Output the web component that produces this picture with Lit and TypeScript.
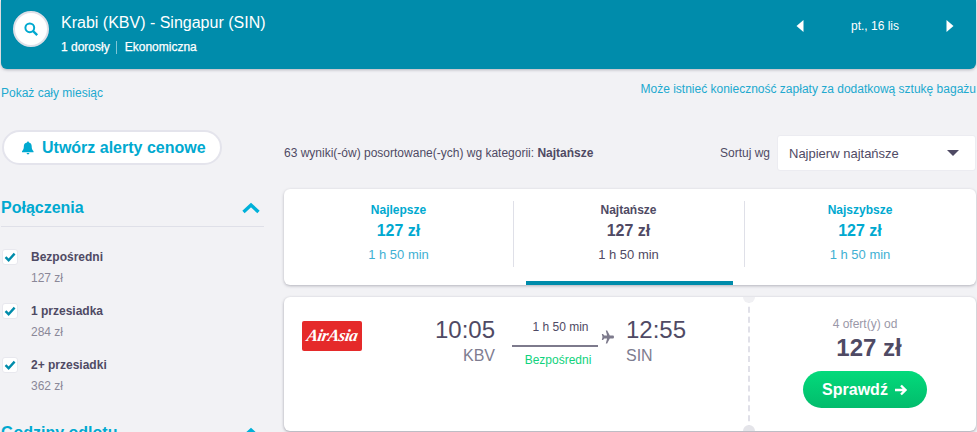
import { LitElement, html, css, svg } from "lit";
import { customElement } from "lit/decorators.js";

const check = html`<svg width="12" height="10" viewBox="0 0 12 10"><path d="M1.500 5.200 4.600 8.200 10.600 1.600" fill="none" stroke="#008cab" stroke-width="2.400"/></svg>`;
const chevron = svg`<path d="M1.500 10 9 3l7.500 7" fill="none" stroke="#00b1d9" stroke-width="3.400"/>`;

const filters = [
  ["Bezpośredni", "127 zł"],
  ["1 przesiadka", "284 zł"],
  ["2+ przesiadki", "362 zł"],
];
const tabs = [
  ["Najlepsze", false],
  ["Najtańsze", true],
  ["Najszybsze", false],
] as const;

@customElement("app-root")
export class AppRoot extends LitElement {
  static styles = css`
    :host { display: block; height: 432px; overflow: hidden; background: #f2f2f5; color: #4f4a64; font-family: "Liberation Sans", Arial, sans-serif; }
    * { box-sizing: border-box; }
    .head { height: 69px; margin: 0 1px; background: #008cab; border-radius: 0 0 6px 6px; box-shadow: 0 1px 3px rgba(60,60,80,.35); color: #fff; display: flex; padding: 11px 0 0 12px; }
    .search { width: 36px; height: 36px; border-radius: 50%; background: #fff; border: 2px solid #dfe0e8; display: flex; align-items: center; justify-content: center; flex: none; }
    .route { margin-left: 12px; flex: 1; padding-top: 1px; }
    .title { font-size: 16px; line-height: 22px; }
    .sub { display: flex; align-items: center; font-size: 12px; -webkit-text-stroke: .25px #fff; margin-top: 6px; line-height: 14px; }
    .sub i { width: 1px; height: 13px; background: #7fc5d5; margin: 0 8px 0 6px; }
    .date { width: 158px; margin-right: 22px; display: flex; justify-content: space-between; align-items: center; height: 22px; margin-top: 4px; font-size: 12px; }
    .links { display: flex; justify-content: space-between; align-items: center; font-size: 12px; color: #21a9cf; height: 43px; padding: 4px 1px 0 1px; }
    .links .r { position: relative; top: -4px; }
    .main { display: flex; padding-left: 2px; margin-top: 18px; }
    .side { width: 262px; flex: none; }
    .alert { width: 220px; height: 35px; background: #fff; border: 2px solid #e4e4ec; border-radius: 18px; display: flex; align-items: center; padding-left: 18px; gap: 8px; color: #00a9d0; font-weight: 700; font-size: 16px; }
    .sec { display: flex; justify-content: space-between; align-items: center; margin: 25px 0 0 -1px; height: 37px; border-bottom: 1px solid #dfe0e8; padding: 0 4px 0 0; color: #00a9d0; font-size: 16px; font-weight: 700; }
    .filters { padding-top: 22px; }
    .f { display: flex; height: 54px; }
    .box { width: 16px; height: 16px; background: #fff; border-radius: 3px; border: 1px solid #e8e8ee; display: flex; align-items: center; justify-content: center; margin-right: 13px; }
    .f b { display: block; font-size: 12px; line-height: 16px; }
    .f span { display: block; font-size: 12px; line-height: 14px; color: #8a8898; margin-top: 6px; }
    .sec2 { margin-top: 10px; border: 0; height: 24px; }
    .content { margin-left: 20px; width: 692px; flex: none; }
    .bar { display: flex; align-items: center; height: 46px; font-size: 12px; }
    .bar .n { flex: 1; }
    .sortl { font-size: 12px; margin-right: 7px; }
    .sel { width: 199px; height: 36px; background: #fff; border: 1px solid #ececf1; border-radius: 3px; display: flex; align-items: center; justify-content: space-between; padding: 0 16px 0 11px; font-size: 13px; }
    .arrow { width: 0; height: 0; border-left: 6px solid transparent; border-right: 6px solid transparent; border-top: 6px solid #4f4a64; }
    .tabs { margin-top: 13px; height: 96px; background: #fff; border-radius: 6px; box-shadow: 0 1px 3px rgba(60,60,80,.35); display: flex; padding-top: 12px; overflow: hidden; }
    .tab { flex: none; width: 229px; height: 84px; position: relative; text-align: center; color: #00a9d0; }
    .tab:nth-child(2) { width: 231px; }
    .tab:nth-child(3) { width: 232px; }
    .tab + .tab::before { content: ""; position: absolute; left: 0; top: 0; height: 66px; width: 1px; background: #dfe0e8; }
    .tab.on { color: #4f4a64; }
    .tab .t { font-size: 12px; font-weight: 700; line-height: 19px; }
    .tab .p { font-size: 16px; font-weight: 700; line-height: 22px; }
    .tab .d { font-size: 13px; line-height: 22px; margin-top: 2px; color: #3fb0d3; }
    .tab.on .d { color: #4f4a64; }
    .tab.on::after { content: ""; position: absolute; left: 13px; right: 11px; bottom: 0; height: 4px; background: #008cab; }
    .card { margin-top: 12px; height: 134px; background: #fff; border-radius: 6px; box-shadow: 0 1px 3px rgba(60,60,80,.45); display: flex; overflow: hidden; }
    .left { width: 464px; flex: none; display: flex; padding: 24px 0 0 18px; }
    .logo { width: 60px; height: 30px; background: #e52a2a; border-radius: 2px; color: #fff; font: italic 700 17px/29px "Liberation Serif", serif; text-align: center; letter-spacing: -.5px; flex: none; }
    .logo span { display: inline-block; transform: skewX(-10deg); }
    .time { font-size: 24px; line-height: 24px; margin-top: -3px; }
    .code { font-size: 16px; line-height: 18px; margin-top: 5px; color: #7e7c90; }
    .dep { width: 133px; text-align: right; flex: none; }
    .mid { width: 100px; margin-left: 17px; text-align: center; flex: none; position: relative; font-size: 12px; }
    .dur { line-height: 14px; margin-top: -1px; margin-left: -3px; }
    .line { height: 2px; background: #7d7a8c; width: 86px; margin: 11px 0 0 0; }
    .mid svg { position: absolute; left: 89px; top: 9px; }
    .ok { color: #0fd27c; line-height: 14px; margin-top: 6px; width: 92px; }
    .arr { margin-left: 14px; }
    .sep { width: 0; border-left: 2px dashed #e0e0e8; position: relative; flex: none; }
    .sep::before, .sep::after { content: ""; position: absolute; left: -7px; width: 12px; height: 12px; border-radius: 50%; background: #f0f0f3; }
    .sep::before { top: -6px; }
    .sep::after { bottom: -6px; background: #e4e4e9; }
    .right { flex: 1; text-align: center; padding: 20px 0 0 4px; }
    .of { font-size: 12px; line-height: 14px; color: #9a98a8; }
    .pr { font-size: 24px; font-weight: 700; line-height: 26px; margin-top: 4px; padding-left: 8px; }
    .btn { width: 124px; height: 37px; margin: 10px auto 0; border-radius: 19px; background: linear-gradient(#03da7b, #02bc6c); color: #fff; font-weight: 700; font-size: 16px; display: flex; align-items: center; justify-content: center; gap: 6px; }
  `;

  render() {
    return html`
      <header class="head">
        <div class="search"><svg width="16" height="16" viewBox="0 0 16 16"><circle cx="6.800" cy="6.800" r="4.400" fill="none" stroke="#00a9d0" stroke-width="2"/><path d="M10 10l4.200 4.200" stroke="#00a9d0" stroke-width="2.400"/></svg></div>
        <div class="route">
          <div class="title">Krabi (KBV) - Singapur (SIN)</div>
          <div class="sub">1 dorosły<i></i>Ekonomiczna</div>
        </div>
        <div class="date">
          <svg width="8" height="12" viewBox="0 0 8 12"><path d="M7.500 0v12L.5 6z" fill="#fff"/></svg>
          <span>pt., 16 lis</span>
          <svg width="8" height="12" viewBox="0 0 8 12"><path d="M.5 0v12l7-6z" fill="#fff"/></svg>
        </div>
      </header>
      <div class="links"><span>Pokaż cały miesiąc</span><span class="r">Może istnieć konieczność zapłaty za dodatkową sztukę bagażu</span></div>
      <div class="main">
        <aside class="side">
          <div class="alert"><svg width="12" height="14" viewBox="0 0 13 14"><path d="M6.500 0c.7 0 1 .5 1 1 2 .5 3 2 3 4.200 0 2.800.7 4 2 5.300v1H0v-1c1.300-1.300 2-2.500 2-5.300C2 3 3 1.500 5.500 1c0-.5.300-1 1-1zM5 12.500h3c0 1-.7 1.500-1.500 1.500S5 13.500 5 12.500z" fill="#00a9d0"/></svg>Utwórz alerty cenowe</div>
          <div class="sec"><span>Połączenia</span><svg width="18" height="12" viewBox="0 0 18 12">${chevron}</svg></div>
          <div class="filters">
            ${filters.map(([n, p]) => html`<div class="f"><div class="box">${check}</div><div><b>${n}</b><span>${p}</span></div></div>`)}
          </div>
          <div class="sec sec2"><span>Godziny odlotu</span><svg width="18" height="12" viewBox="0 0 18 12">${chevron}</svg></div>
        </aside>
        <section class="content">
          <div class="bar">
            <div class="n">63 wyniki(-ów) posortowane(-ych) wg kategorii: <b>Najtańsze</b></div>
            <span class="sortl">Sortuj wg</span>
            <div class="sel"><span>Najpierw najtańsze</span><i class="arrow"></i></div>
          </div>
          <div class="tabs">
            ${tabs.map(([n, on]) => html`<div class="tab ${on ? "on" : ""}"><div class="t">${n}</div><div class="p">127 zł</div><div class="d">1 h 50 min</div></div>`)}
          </div>
          <article class="card">
            <div class="left">
              <div class="logo"><span>AirAsia</span></div>
              <div class="dep"><div class="time">10:05</div><div class="code">KBV</div></div>
              <div class="mid">
                <div class="dur">1 h 50 min</div>
                <div class="line"></div>
                <svg width="13" height="14" viewBox="0 0 13 14"><path d="M4.800.5h1.400l2.600 5h3c.8 0 1.200.6 1.200 1.500s-.4 1.500-1.200 1.500h-3l-2.600 5H4.800l1.300-5H3.300L2 10H.8l.7-3-.7-3H2l1.300 1.500h2.800z" fill="#7d7a8c"/></svg>
                <div class="ok">Bezpośredni</div>
              </div>
              <div class="arr"><div class="time">12:55</div><div class="code">SIN</div></div>
            </div>
            <div class="sep"></div>
            <div class="right">
              <div class="of">4 ofert(y) od</div>
              <div class="pr">127 zł</div>
              <div class="btn">Sprawdź <svg width="14" height="12" viewBox="0 0 14 12"><path d="M1 6h10M7 1.500 11.500 6 7 10.500" fill="none" stroke="#fff" stroke-width="2.400"/></svg></div>
            </div>
          </article>
        </section>
      </div>
    `;
  }
}
